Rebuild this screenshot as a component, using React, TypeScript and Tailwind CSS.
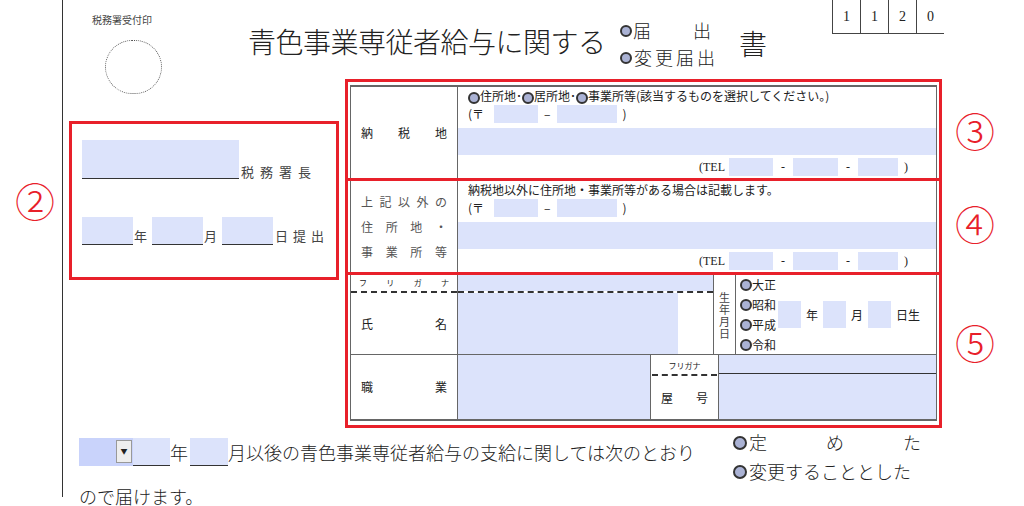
import React from "react";

const F = { fontFamily: '"Noto Sans CJK JP", "Noto Sans", sans-serif' };
const S = { fontFamily: '"Liberation Serif", "Noto Sans CJK JP", serif' };

function Radio({ className = "" }: { className?: string }) {
  return <span className={"inline-block w-[12px] h-[12px] rounded-full border-[2px] border-[#333] bg-[#aab2d4] align-middle " + className} />;
}
function Blue({ w, h = 18, className = "" }: { w: number; h?: number; className?: string }) {
  return <span className={"inline-block bg-[#dce3fb] align-middle " + className} style={{ width: w, height: h }} />;
}

function AddrRow({ first }: { first: React.ReactNode }) {
  return (
    <div className="flex-1 flex flex-col text-[12px] text-[#222] leading-none">
      <div className="h-[16px] pt-[3px] pl-[10px] whitespace-nowrap">{first}</div>
      <div className="h-[22px] flex items-center pl-[10px] gap-[0px]">
        <span>(〒</span><Blue w={44} className="ml-[10px]" /><span className="mx-[6px]">–</span><Blue w={60} /><span className="ml-[6px]">)</span>
      </div>
      <div className="h-[27px] bg-[#dce3fb] mt-[3px]" />
      <div className="flex-1 flex items-center justify-end pr-[28px] gap-0" style={S}>
        <span>(TEL</span><Blue w={44} className="ml-[4px]" /><span className="mx-[8px]">-</span><Blue w={45} /><span className="mx-[8px]">-</span><Blue w={40} /><span className="ml-[6px]">)</span>
      </div>
    </div>
  );
}

export default function App() {
  return (
    <div className="relative w-[1024px] h-[506px] bg-white overflow-hidden text-[#222]" style={F}>
      <div className="absolute left-[62px] top-0 h-[497px] border-l border-[#333]" />
      <div className="absolute left-[92px] top-[12px] text-[10px] text-[#444]">税務署受付印</div>
      <div className="absolute left-[105px] top-[40px] w-[57px] h-[54px] rounded-full border border-dotted border-[#555]" />

      <div className="absolute left-[248px] top-[20px] text-[28px] font-light tracking-[-0.5px]">青色事業専従者給与に関する</div>
      <div className="absolute left-[620px] top-[17px] flex flex-col text-[18px] font-light leading-[27px]">
        <div className="flex items-center"><Radio /><span className="ml-[1px]">届</span><span className="ml-[42px]">出</span></div>
        <div className="flex items-center"><Radio /><span className="ml-[2px] tracking-[3px]">変更届出</span></div>
      </div>
      <div className="absolute left-[739px] top-[22px] text-[28px] font-light">書</div>

      <div className="absolute left-[832px] top-0 flex border-b border-[#444] text-[14px]" style={S}>
        {["1", "1", "2", "0"].map((c, i) => (
          <div key={i} className="w-[28px] h-[33px] border-l border-[#444] flex items-center justify-center">{c}</div>
        ))}
      </div>

      {/* box 2 */}
      <div className="absolute left-[15px] top-[180px] text-[40px] text-[#e8202a] font-light leading-none">②</div>
      <div className="absolute left-[69px] top-[121px] w-[270px] h-[159px] border-[3px] border-[#e8202a] flex flex-col text-[13px] text-[#444]">
        <div className="flex items-end mt-[16px] ml-[10px]">
          <span className="w-[157px] h-[39px] bg-[#dce3fb] border-b border-[#333]" />
          <span className="tracking-[6px] ml-[2px] mb-[-2px]">税務署長</span>
        </div>
        <div className="flex items-end mt-[38px] ml-[10px]">
          <span className="w-[51px] h-[28px] bg-[#dce3fb] border-b border-[#333]" /><span className="mx-[1px]">年</span>
          <span className="w-[51px] h-[28px] bg-[#dce3fb] border-b border-[#333] ml-[4px]" /><span className="mx-[1px]">月</span>
          <span className="w-[51px] h-[28px] bg-[#dce3fb] border-b border-[#333] ml-[4px]" /><span className="ml-[2px] tracking-[5px]">日提出</span>
        </div>
      </div>

      {/* circled numbers */}
      <div className="absolute left-[955px] top-[110px] text-[40px] text-[#e8202a] font-light leading-none">③</div>
      <div className="absolute left-[955px] top-[203px] text-[40px] text-[#e8202a] font-light leading-none">④</div>
      <div className="absolute left-[955px] top-[322px] text-[40px] text-[#e8202a] font-light leading-none">⑤</div>

      {/* main table */}
      <div className="absolute left-[345px] top-[79px] w-[597px] flex flex-col">
        <div className="h-[102px] border-[3px] border-[#e8202a] px-[2px] pt-[3px] flex">
          <div className="flex-1 flex border-x border-t-2 border-[#666]">
            <div className="w-[107px] border-r border-[#666] flex items-center px-[10px] justify-between text-[12px]"><span>納</span><span>税</span><span>地</span></div>
            <AddrRow first={<><Radio />住所地･<Radio />居所地･<Radio />事業所等(該当するものを選択してください。)</>} />
          </div>
        </div>
        <div className="h-[94px] border-[3px] border-t-0 border-[#e8202a] px-[2px] flex">
          <div className="flex-1 flex border-x border-[#666]">
            <div className="w-[107px] border-r border-[#666] flex flex-col justify-center px-[10px] text-[12px] text-[#555] leading-[25px]">
              <div className="flex justify-between"><span>上</span><span>記</span><span>以</span><span>外</span><span>の</span></div>
              <div className="flex justify-between"><span>住</span><span>所</span><span>地</span><span>・</span></div>
              <div className="flex justify-between"><span>事</span><span>業</span><span>所</span><span>等</span></div>
            </div>
            <AddrRow first="納税地以外に住所地・事業所等がある場合は記載します。" />
          </div>
        </div>
        <div className="h-[153px] border-[3px] border-t-0 border-[#e8202a] px-[2px] flex flex-col">
          <div className="h-[80px] flex border-x border-b border-[#666]">
            <div className="w-[107px] border-r border-[#666] flex flex-col text-[12px]">
              <div className="h-[16px] flex justify-between px-[8px] text-[8px] leading-[16px]"><span>フ</span><span>リ</span><span>ガ</span><span>ナ</span></div>
              <div className="border-t-2 border-dashed border-[#333]" />
              <div className="flex-1 flex items-center justify-between px-[10px]"><span>氏</span><span>名</span></div>
            </div>
            <div className="w-[256px] border-r border-[#666] flex flex-col">
              <div className="h-[16px] bg-[#dce3fb]" />
              <div className="border-t-2 border-dashed border-[#333]" />
              <div className="flex-1 flex"><div className="w-[220px] bg-[#dce3fb]" /></div>
            </div>
            <div className="w-[22px] border-r border-[#666] flex flex-col items-center justify-center text-[11px] leading-[12px] text-[#444]">
              <span>生</span><span>年</span><span>月</span><span>日</span>
            </div>
            <div className="flex-1 flex items-center text-[12px] pl-[4px]">
              <div className="flex flex-col leading-[20px]">
                <span className="flex items-center"><Radio />大正</span>
                <span className="flex items-center"><Radio />昭和</span>
                <span className="flex items-center"><Radio />平成</span>
                <span className="flex items-center"><Radio />令和</span>
              </div>
              <Blue w={23} h={27} className="ml-[2px]" /><span className="mx-[5px]">年</span>
              <Blue w={23} h={27} /><span className="mx-[5px]">月</span>
              <Blue w={23} h={27} /><span className="ml-[5px]">日生</span>
            </div>
          </div>
          <div className="flex-1 flex border-x border-b-2 border-[#666] mb-[4px]">
            <div className="w-[107px] border-r border-[#666] flex items-center justify-between px-[10px] text-[12px]"><span>職</span><span>業</span></div>
            <div className="w-[193px] bg-[#dce3fb] border-r border-[#666]" />
            <div className="w-[68px] border-r border-[#666] flex flex-col text-[12px]">
              <div className="h-[19px] text-[8px] text-center leading-[22px]">フリガナ</div>
              <div className="border-t-2 border-dashed border-[#333] mx-[1px]" />
              <div className="flex-1 flex items-center justify-between px-[10px]"><span>屋</span><span>号</span></div>
            </div>
            <div className="flex-1 flex flex-col bg-[#dce3fb]">
              <div className="h-[19px] border-b border-[#333]" />
            </div>
          </div>
        </div>
      </div>

      {/* bottom text */}
      <div className="absolute left-[79px] top-[438px] flex items-end text-[18px] font-light">
        <span className="w-[54px] h-[28px] bg-[#c9d3fb] relative">
          <span className="absolute right-[1px] top-[2px] w-[16px] h-[23px] bg-[#eee] border border-[#999] flex items-center justify-center text-[7px]">▼</span>
        </span>
        <span className="w-[37px] h-[28px] bg-[#dce3fb] border-b border-[#333]" /><span>年</span>
        <span className="w-[38px] h-[28px] bg-[#dce3fb] border-b border-[#333] ml-[2px]" />
        <span>月以後の青色事業専従者給与の支給に関しては次のとおり</span>
      </div>
      <div className="absolute left-[79px] top-[483px] text-[18px] font-light">ので届けます。</div>
      <div className="absolute left-[733px] top-[428px] flex flex-col text-[18px] font-light leading-[29px] w-[192px]">
        <div className="flex items-center"><Radio className="mr-[2px] w-[14px] h-[14px]" /><span className="flex-1 flex justify-between pr-[4px]"><span>定</span><span>め</span><span>た</span></span></div>
        <div className="flex items-center"><Radio className="mr-[2px] w-[14px] h-[14px]" /><span>変更することとした</span></div>
      </div>
    </div>
  );
}
